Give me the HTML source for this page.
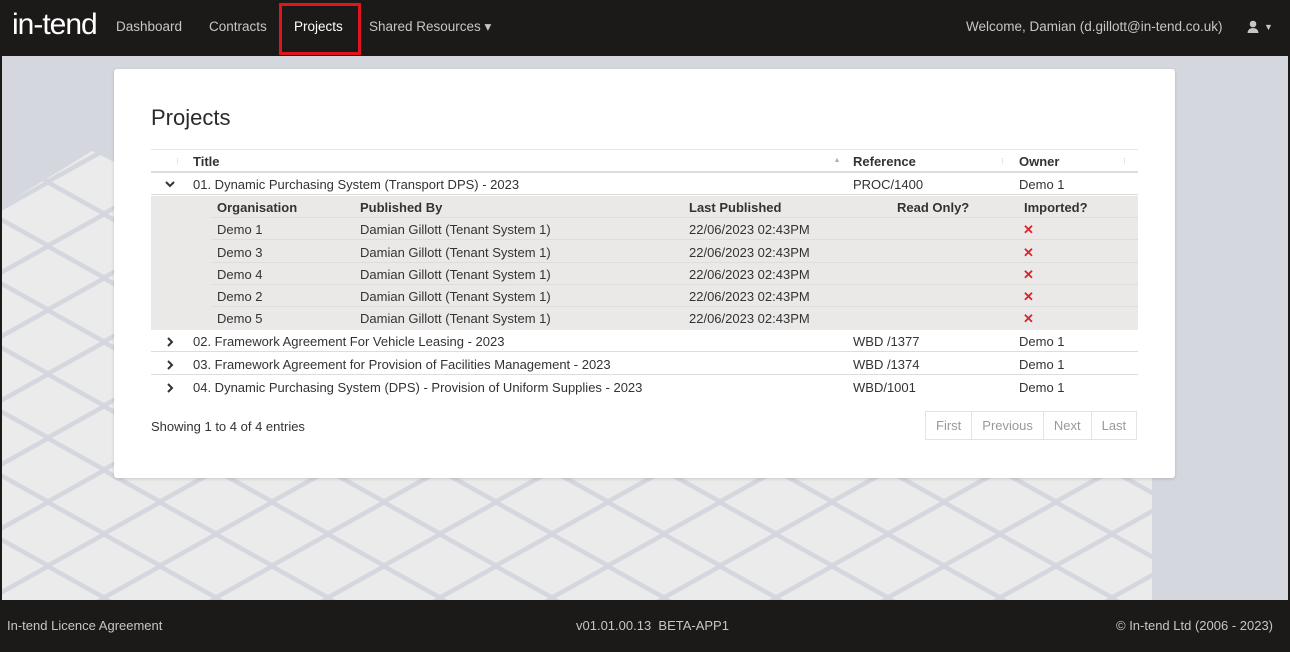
<!DOCTYPE html>
<html><head><meta charset="utf-8"><style>
*{box-sizing:border-box;margin:0;padding:0}
body{width:1290px;height:652px;overflow:hidden;font-family:"Liberation Sans",sans-serif;background:#1c1a19;position:relative;color:#333}
.nav{position:absolute;left:0;top:0;width:1290px;height:56px;background:#1c1a19;color:#c8c6c4;font-size:13.5px}
.nav span{position:absolute;top:19px}
.logo{position:absolute;left:12px;top:8px;font-size:30px;color:#fff;font-family:"Liberation Sans Narrow","Liberation Sans",sans-serif;letter-spacing:-1px}
.bg{position:absolute;left:2px;top:56px;width:1286px;height:544px;background:#d4d7de;overflow:hidden}
.card{position:absolute;left:114px;top:69px;width:1061px;height:409px;background:#fff;border-radius:3px;box-shadow:0 1px 3px rgba(0,0,0,.15)}
h1{position:absolute;left:37px;top:36px;font-size:22px;font-weight:normal;color:#2a2a2a}
.t{position:absolute;left:37px;width:987px;font-size:13px}
.row{position:absolute;left:0;width:987px;height:22px;border-bottom:1px solid #ddd}
.row span{position:absolute;top:4px;white-space:nowrap}
.b{font-weight:bold}
.x{color:#d9232d;font-weight:bold}
.pg{position:absolute;left:811px;top:342px;height:29px;border:1px solid #e3e3e3;display:flex;font-size:13px;color:#999}
.pg div{padding:6px 10px 6px 10px;border-right:1px solid #e3e3e3}
.pg div:last-child{border:none}
.foot{position:absolute;left:0;top:600px;width:1290px;height:52px;background:#1c1a19;color:#c8c6c4;font-size:13px}
.foot span{position:absolute;top:18px}
.chev{font-size:14px;font-weight:bold}
</style></head><body>
<div class="nav">
<div class="logo">in-tend</div>
<span style="left:116px">Dashboard</span>
<span style="left:209px">Contracts</span>
<span style="left:294px;color:#fff">Projects</span>
<div style="position:absolute;left:279px;top:3px;width:82px;height:52px;border:3px solid #e0161f"></div>
<span style="left:369px">Shared Resources ▾</span>
<span style="left:966px">Welcome, Damian (d.gillott@in-tend.co.uk)</span>
<svg style="position:absolute;left:1247px;top:20px" width="12" height="14" viewBox="0 0 12 14"><circle cx="6" cy="4" r="3.3" fill="#c8c6c4"/><path d="M0.5 13 Q1 8 6 8 Q11 8 11.5 13Z" fill="#c8c6c4"/></svg>
<span style="left:1264px;font-size:9px;top:22px">▼</span>
</div>
<div class="bg">
<svg width="1286" height="544" style="position:absolute;left:0;top:0">
<defs><pattern id="p" width="112" height="64" patternUnits="userSpaceOnUse" x="-10" y="-2">
<rect width="112" height="64" fill="#d4d7de"/>
<polygon points="56,3 108,32 56,61 4,32" fill="#ebebeb"/>
<polygon points="0,-29 52,0 0,29 -52,0" fill="#ebebeb"/>
<polygon points="112,-29 164,0 112,29 60,0" fill="#ebebeb"/>
<polygon points="0,35 52,64 0,93 -52,64" fill="#ebebeb"/>
<polygon points="112,35 164,64 112,93 60,64" fill="#ebebeb"/>
</pattern></defs>
<polygon points="0,150 90,95 140,120 700,400 1150,400 1150,544 0,544" fill="url(#p)"/>
</svg>
</div>
<div class="card">
<h1>Projects</h1>
<div class="t" style="top:80px;height:180px">
<div class="row" style="top:0;border-top:1px solid #e5e5e5;border-bottom:2px solid #ddd;height:24px"><span style="left:25px;color:#ccc;font-size:9px;top:6px">⁝</span><span class="b" style="left:42px">Title</span><span style="left:684px;color:#aaa;font-size:8px;top:5px">▴</span><span class="b" style="left:702px">Reference</span><span style="left:850px;color:#ccc;font-size:9px;top:6px">⁝</span><span class="b" style="left:868px">Owner</span><span style="left:972px;color:#ccc;font-size:9px;top:6px">⁝</span></div>
<div class="row" style="top:24px"><svg style="position:absolute;left:14px;top:8px" width="10" height="7" viewBox="0 0 10 7"><path d="M1 1 L5 5 L9 1" stroke="#333" stroke-width="2" fill="none"/></svg><span style="left:42px">01. Dynamic Purchasing System (Transport DPS) - 2023</span><span style="left:702px">PROC/1400</span><span style="left:868px">Demo 1</span></div>
<div style="position:absolute;left:0;top:47px;width:987px;height:134px;background:#ebe9e8"></div>
<div class="row" style="top:47px;left:60px;width:927px"><span class="b" style="left:6px">Organisation</span><span class="b" style="left:149px">Published By</span><span class="b" style="left:478px">Last Published</span><span class="b" style="left:686px">Read Only?</span><span class="b" style="left:813px">Imported?</span></div>
<div class="row" style="top:69px;left:60px;width:927px"><span style="left:6px">Demo 1</span><span style="left:149px">Damian Gillott (Tenant System 1)</span><span style="left:478px">22/06/2023 02:43PM</span><span class="x" style="left:812px">✕</span></div>
<div class="row" style="top:92px;left:60px;width:927px"><span style="left:6px">Demo 3</span><span style="left:149px">Damian Gillott (Tenant System 1)</span><span style="left:478px">22/06/2023 02:43PM</span><span class="x" style="left:812px">✕</span></div>
<div class="row" style="top:114px;left:60px;width:927px"><span style="left:6px">Demo 4</span><span style="left:149px">Damian Gillott (Tenant System 1)</span><span style="left:478px">22/06/2023 02:43PM</span><span class="x" style="left:812px">✕</span></div>
<div class="row" style="top:136px;left:60px;width:927px"><span style="left:6px">Demo 2</span><span style="left:149px">Damian Gillott (Tenant System 1)</span><span style="left:478px">22/06/2023 02:43PM</span><span class="x" style="left:812px">✕</span></div>
<div class="row" style="top:158px;left:60px;width:927px;border:none"><span style="left:6px">Demo 5</span><span style="left:149px">Damian Gillott (Tenant System 1)</span><span style="left:478px">22/06/2023 02:43PM</span><span class="x" style="left:812px">✕</span></div>
<div class="row" style="top:181px"><svg style="position:absolute;left:16px;top:7px" width="7" height="10" viewBox="0 0 7 10"><path d="M1 1 L5 5 L1 9" stroke="#333" stroke-width="2" fill="none"/></svg><span style="left:42px">02. Framework Agreement For Vehicle Leasing - 2023</span><span style="left:702px">WBD /1377</span><span style="left:868px">Demo 1</span></div>
<div class="row" style="top:204px"><svg style="position:absolute;left:16px;top:7px" width="7" height="10" viewBox="0 0 7 10"><path d="M1 1 L5 5 L1 9" stroke="#333" stroke-width="2" fill="none"/></svg><span style="left:42px">03. Framework Agreement for Provision of Facilities Management - 2023</span><span style="left:702px">WBD /1374</span><span style="left:868px">Demo 1</span></div>
<div class="row" style="top:227px;border:none"><svg style="position:absolute;left:16px;top:7px" width="7" height="10" viewBox="0 0 7 10"><path d="M1 1 L5 5 L1 9" stroke="#333" stroke-width="2" fill="none"/></svg><span style="left:42px">04. Dynamic Purchasing System (DPS) - Provision of Uniform Supplies - 2023</span><span style="left:702px">WBD/1001</span><span style="left:868px">Demo 1</span></div>
</div>
<div style="position:absolute;left:37px;top:350px;font-size:13px">Showing 1 to 4 of 4 entries</div>
<div class="pg"><div>First</div><div>Previous</div><div>Next</div><div>Last</div></div>
</div>
<div class="foot"><span style="left:7px">In-tend Licence Agreement</span><span style="left:576px">v01.01.00.13 &nbsp;BETA-APP1</span><span style="left:1116px">© In-tend Ltd (2006 - 2023)</span></div>
</body></html>
